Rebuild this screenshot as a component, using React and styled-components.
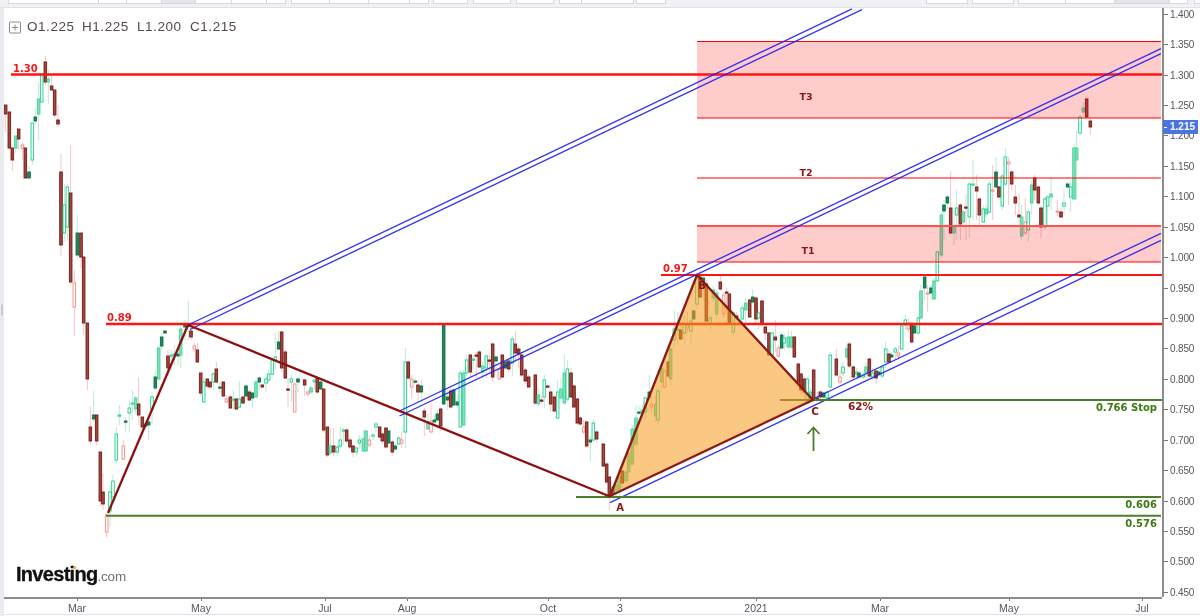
import React from "react";
import styled, { createGlobalStyle } from "styled-components";

const Global = createGlobalStyle`
  html, body { margin: 0; padding: 0; background: #fff; }
  body { font-family: "Liberation Sans", Arial, sans-serif; overflow: hidden; }
`;

const Page = styled.div`
  width: 1200px;
  height: 616px;
  display: flex;
  flex-direction: column;
  background: #eff1f5;
  overflow: hidden;
  filter: blur(0.25px);
`;
const TabStrip = styled.div`
  height: 8px;
  flex: none;
  display: flex;
  align-items: flex-start;
  padding-left: 4px;
  border-bottom: 1px solid #dfe1e6;
  box-sizing: border-box;
`;
const Tab = styled.div`
  width: ${p => p.$w}px;
  margin-left: ${p => p.$gap || 0}px;
  height: 3.5px;
  flex: none;
  box-sizing: border-box;
  background: ${p => (p.$selected ? "#e4e5e8" : "#fff")};
  border: 1px solid #d6d8dd;
  border-top: 0;
  border-left-width: ${p => (p.$gap ? 1 : 0)}px;
`;
const Frame = styled.div`
  flex: 1;
  display: flex;
  min-height: 0;
`;
const LeftRail = styled.div`
  width: 4px;
  flex: none;
  background: #e9ebf0;
  display: flex;
  align-items: center;
  padding-bottom: 4px;
  box-sizing: border-box;
`;
const Grip = styled.div`
  width: 2px;
  height: 12px;
  background: #c9cbd0;
  border-radius: 2px 0 0 2px;
  margin-left: 1px;
`;
const Main = styled.div`
  flex: 1;
  display: flex;
  flex-direction: column;
  background: #fff;
  min-width: 0;
`;
const ChartRow = styled.div`
  height: 589px;
  flex: none;
  display: flex;
`;
const Plot = styled.div`
  width: 1158px;
  flex: none;
  position: relative;
  border-bottom: 2px solid #8c8c8c;
  box-sizing: content-box;
  height: 589px;
`;
const PlotSvg = styled.svg`
  display: block;
  width: 1158px;
  height: 589px;
`;
const Legend = styled.div`
  position: absolute;
  left: 5px;
  top: 12px;
  display: flex;
  align-items: center;
  color: #55494f;
  font-size: 13.5px;
  letter-spacing: 0.55px;
  line-height: 14px;
`;
const LegendIcon = styled.svg`
  width: 12px;
  height: 13px;
  margin-right: 6px;
  flex: none;
`;
const LegendItem = styled.span`
  width: ${p => p.$w}px;
  white-space: nowrap;
`;
const LogoWrap = styled.div`
  position: absolute;
  left: 12px;
  top: 555px;
  display: flex;
  align-items: baseline;
  white-space: nowrap;
`;
const LogoMain = styled.span`
  position: relative;
  font-size: 20px;
  font-weight: 700;
  color: #111;
  letter-spacing: -0.7px;
  -webkit-text-stroke: 0.3px #111;
`;
const LogoDot = styled.span`
  position: absolute;
  left: 57px;
  top: 3px;
  width: 3px;
  height: 3px;
  border-radius: 50%;
  background: #f7a11a;
`;
const LogoCom = styled.span`
  font-size: 13.5px;
  color: #6f6f6f;
  letter-spacing: -0.2px;
`;
const PriceAxis = styled.div`
  flex: 1;
  position: relative;
  display: flex;
  flex-direction: column;
  padding-top: 0.8px;
  border-left: 2px solid #8c8c8c;
  box-sizing: border-box;
  background: #fff;
`;
const PriceTick = styled.div`
  height: 30.43px;
  flex: none;
  display: flex;
  align-items: flex-start;
  font-size: 10px;
  line-height: 12px;
  color: #565656;
  letter-spacing: -0.15px;
`;
const TickMark = styled.span`
  width: 4px;
  height: 1px;
  margin: 5px 2px 0 0;
  background: #777;
  flex: none;
`;
const PriceBadge = styled.div`
  position: absolute;
  left: -1px;
  top: 112px;
  width: 35px;
  height: 14px;
  background: #4a74e0;
  color: #fff;
  font-size: 10px;
  font-weight: 700;
  line-height: 14px;
  display: flex;
  align-items: center;
  padding-left: 1px;
  box-sizing: border-box;
`;
const BadgeTick = styled.span`
  width: 3px;
  height: 1px;
  margin-right: 3px;
  background: #fff;
`;
const TimeAxis = styled.div`
  height: 18px;
  flex: none;
  display: flex;
  background: #fff;
  border-bottom: 1px solid #dfe1e6;
  box-sizing: border-box;
  padding-top: 1.5px;
`;
const TimeTick = styled.div`
  width: 30px;
  margin-left: ${p => p.$gap}px;
  flex: none;
  display: flex;
  flex-direction: column;
  align-items: center;
  color: #565656;
  font-size: 10.5px;
  line-height: 12px;
`;
const TimeMark = styled.span`
  width: 1px;
  height: 2px;
  background: #777;
  margin-bottom: 1px;
`;

/* chart drawing parts */
const HLine = styled.line`
  stroke: ${p => p.$c};
  stroke-width: ${p => p.$w}px;
`;
const Zone = styled.rect`
  fill: #ff0000;
  fill-opacity: 0.2;
`;
const Channel = styled.line`
  stroke: #2020ee;
  stroke-width: 1.35px;
  stroke-opacity: 0.9;
`;
const Leg = styled.line`
  stroke: #8c1010;
  stroke-width: 2.3px;
`;
const Triangle = styled.polygon`
  fill: #f79a1e;
  fill-opacity: 0.55;
  stroke: #8c1a14;
  stroke-width: 2.3px;
  stroke-linejoin: round;
`;
const Label = styled.text`
  font-family: "DejaVu Sans", sans-serif;
  font-weight: 700;
  font-size: ${p => p.$s || 10}px;
  fill: ${p => p.$c};
  text-anchor: ${p => p.$a || "start"};
`;
const Arrow = styled.path`
  fill: none;
  stroke: #4a7f2a;
  stroke-width: 1.8px;
`;

const BODY = {
  r: { fill: "#a5443c", stroke: "#6e1d16" },
  p: { fill: "#fff", stroke: "#f28a86" },
  g: { fill: "#fff", stroke: "#14d088" },
  d: { fill: "#1b8a5c", stroke: "#0e6a42" },
  t: { fill: "#85dfba", stroke: "#3fd49c" },
};
const WickLine = styled.line`
  stroke: ${p => p.$c};
  stroke-width: 1px;
`;
const Body = styled.rect`
  fill: ${p => BODY[p.$k].fill};
  stroke: ${p => BODY[p.$k].stroke};
  stroke-width: 0.9px;
`;

const segA = [
  [17,105,114,"r",105,132],[28,112,148,"r",112,150],[37,148,160,"r",148,171],[47,136,148,"t",136,153],[56,129,139,"r",129,150],
  [67,145,148,"p",142,160],[76,148,178,"r",148,178],[87,172,178,"d",166,178],[97,123,160,"g",123,165],[106,117,121,"d",108,125],
  [116,99,114,"t",83,140],[125,74,102,"g",74,102],[136,62,82,"r",56,85],[145,79,82,"t",69,104],[155,86,90,"r",74,90],
  [164,90,115,"r",90,118],[174,120,124,"r",105,127],[183,172,245,"r",154,256],[193,205,233,"g",184,242],[202,187,227,"g",184,241],
  [212,193,282,"r",145,285],[223,283,307,"p",270,336],[232,233,255,"d",215,258],[243,233,257,"r",233,268],[251,257,323,"r",257,334],
  [262,323,379,"r",323,390],[271,427,441,"r",407,445],[281,415,419,"d",391,422],[290,415,441,"r",415,445],[301,452,501,"r",452,506],
  [309,492,504,"r",473,510],[320,515,532,"p",513,537],[330,492,511,"g",485,527],[339,481,497,"g",475,500],[349,434,460,"g",427,463],
  [358,415,416,"g",405,425],[370,446,459,"p",440,460],[377,421,422,"d",417,432],[388,408,413,"g",400,432],[397,403,404,"t",390,420],
  [407,398,409,"t",396,414],[416,404,415,"r",377,425],[427,417,427,"r",417,430],[437,424,426,"d",420,430],[446,422,425,"d",415,440],
  [456,397,409,"g",392,424],[466,377,388,"d",370,390],[476,348,379,"t",345,380],[485,337,346,"d",333,350],[495,331,333,"d",330,334],
  [504,356,368,"r",350,376],[514,355,356,"g",350,370],[524,354,355,"t",345,365],[534,354,356,"d",350,365],[542,329,355,"t",322,368],
  [555,325,327,"d",320,340],[565,324,326,"t",301,340],[573,331,337,"r",325,340],[583,346,349,"p",343,352],[592,350,362,"r",343,363],
  [602,373,393,"r",373,396],[611,382,402,"g",378,403],[622,379,386,"r",379,388],[630,382,387,"r",381,390],[640,374,382,"g",372,390],
  [649,369,382,"r",362,384],[660,387,388,"d",382,393],[670,382,396,"r",381,397],[679,399,402,"p",395,403],[691,397,408,"r",395,409],
  [700,399,400,"t",390,410],[709,399,409,"r",398,410],[718,399,407,"g",381,408],[729,397,403,"r",396,405],[738,386,396,"d",384,400],
  [748,392,400,"r",390,401],[757,393,398,"d",392,408],[768,382,397,"t",380,399],[778,378,382,"d",376,390],[787,385,387,"r",384,388],
  [798,379,383,"g",377,392],[806,374,380,"g",370,383],[817,360,374,"g",358,375],[826,357,361,"g",333,370],[836,342,349,"d",331,350],
  [845,332,368,"r",331,372],[856,352,378,"r",350,379],[864,389,390,"r",378,407],[874,379,382,"g",375,402],[884,384,412,"p",382,412],[894,379,382,"d",377,392],
];
const segB = [
  [14,380,385,"r",378,396],[24,392,394,"p",390,396],[33,388,392,"t",386,394],[43,380,382,"t",378,390],[52,378,392,"r",377,394],
  [62,382,389,"d",380,390],[71,389,430,"r",389,433],[82,427,455,"r",427,457],[91,446,453,"t",428,455],[101,446,452,"r",428,456],
  [112,447,452,"g",445,456],[121,440,446,"g",427,448],[131,430,431,"g",428,445],[140,430,441,"r",428,444],[150,440,447,"r",438,449],
  [159,446,452,"r",444,457],[169,448,452,"g",446,456],[178,440,443,"g",435,449],[190,439,451,"t",430,452],[198,431,451,"t",430,452],
  [208,440,445,"p",436,447],[219,435,436,"t",433,440],[228,424,427,"g",422,432],[239,427,437,"r",426,438],[247,434,441,"r",432,444],
  [258,428,447,"r",427,449],[266,431,443,"d",430,444],[277,442,452,"r",440,456],[286,446,449,"d",444,451],[296,438,444,"g",436,445],
  [305,440,443,"p",432,448],[316,362,432,"g",348,448],[325,362,378,"r",360,380],[335,379,387,"p",375,398],[346,381,382,"d",378,384],
  [354,385,392,"r",380,402],[364,386,392,"d",380,402],[373,411,417,"r",408,436],[384,422,429,"t",414,430],[393,421,432,"p",403,433],
  [403,420,422,"d",415,425],[412,414,420,"d",410,422],[422,409,426,"r",408,431],[431,324,404,"d",324,404],[442,397,400,"d",390,410],
  [452,391,407,"r",388,408],[461,390,405,"d",388,406],[472,402,405,"d",395,408],[481,373,427,"g",370,427],[491,373,425,"t",370,426],
  [500,360,373,"g",355,376],[511,355,372,"r",354,378],[520,359,360,"g",355,370],[529,355,356,"r",352,378],[538,352,367,"r",350,368],
  [548,366,372,"t",362,378],[559,356,368,"g",354,378],[568,360,361,"r",355,372],[578,344,377,"r",342,382],[588,357,361,"d",355,370],
  [598,369,379,"p",365,380],[607,355,377,"r",354,378],[617,362,368,"d",358,370],[626,361,369,"r",358,372],[637,339,363,"g",336,376],
  [646,344,353,"r",331,360],[656,349,354,"r",345,368],[665,355,375,"r",352,377],[676,370,381,"r",368,384],[686,377,387,"r",375,388],
  [706,375,403,"r",374,405],[715,395,404,"t",388,406],[725,400,401,"r",396,404],[733,380,397,"g",375,408],[743,386,387,"r",384,388],
  [752,392,404,"r",390,412],[763,397,411,"r",395,412],[773,392,418,"g",380,419],[783,389,398,"t",378,400],[793,373,403,"t",355,405],
  [802,369,399,"g",360,402],[813,373,397,"r",368,398],[822,386,407,"r",384,408],[832,399,423,"r",398,425],[841,418,424,"r",416,426],
  [851,427,432,"p",420,434],[860,422,446,"r",420,448],[871,440,442,"d",436,461],[880,423,440,"g",420,441],[890,432,439,"r",430,443],
];
const segC = [
  [130,444,466,"r",444,468],[140,464,482,"r",462,484],[148,477,496,"r",476,510],[160,487,493,"d",485,500],[168,485,490,"t",482,498],
  [178,477,490,"t",475,498],[187,471,483,"r",470,490],[198,472,481,"t",470,484],[206,453,472,"t",450,480],[217,429,464,"t",425,466],
  [228,418,444,"t",405,447],[237,412,413,"d",406,415],[247,410,413,"t",405,418],[256,398,412,"g",396,420],[268,392,397,"d",375,398],
  [274,404,407,"p",396,412],[287,404,416,"t",395,422],[294,391,420,"g",388,425],[305,368,382,"t",365,390],[314,371,387,"p",368,388],
  [325,362,376,"r",360,378],[332,349,379,"t",345,385],[343,329,340,"g",311,347],[353,329,330,"g",312,345],[362,330,339,"r",325,340],
  [373,324,333,"g",315,345],[382,325,328,"p",312,335],[393,321,331,"g",318,345],[401,311,319,"d",309,320],[411,275,304,"g",272,310],
  [420,277,297,"r",270,298],[430,278,287,"d",275,300],[439,284,321,"r",280,325],[451,318,324,"g",315,330],[460,290,298,"t",286,302],
  [470,293,314,"t",290,320],[481,282,289,"r",275,291],[491,295,314,"p",292,318],[500,292,293,"r",288,310],[508,294,323,"r",293,325],
  [520,313,332,"g",311,335],[530,316,317,"r",312,320],[547,308,319,"g",305,322],[557,303,310,"t",298,322],[569,300,317,"r",298,318],
  [578,297,302,"d",289,304],[588,298,319,"r",296,325],[596,313,318,"g",310,330],[606,301,324,"r",300,326],[616,327,333,"r",325,340],
  [627,333,355,"r",332,356],[636,333,355,"g",332,356],[646,337,340,"r",320,352],[655,348,356,"p",345,358],[665,335,348,"d",333,350],
  [673,338,343,"g",334,350],[685,337,347,"t",331,349],[694,337,347,"t",331,349],[703,337,357,"r",336,358],[715,364,382,"r",362,384],
  [723,374,390,"r",372,395],[733,379,392,"r",377,400],[742,379,403,"g",377,405],[752,392,400,"t",388,402],[761,370,400,"r",369,402],
  [772,398,399,"r",392,402],[781,392,397,"r",390,404],[791,393,397,"d",391,399],[801,392,398,"g",390,400],[811,355,387,"g",352,389],
  [829,359,375,"r",349,377],[840,377,382,"p",370,384],[849,367,373,"g",362,376],[860,349,357,"t",345,360],[868,344,366,"r",342,368],
  [880,367,377,"r",365,380],[890,372,374,"t",368,380],[897,373,377,"d",370,380],
];
const segD = [
  [40,375,377,"g",372,379],[48,367,373,"t",362,378],[58,359,376,"r",358,378],[68,373,377,"g",368,380],[78,371,378,"r",370,384],
  [87,372,374,"d",368,376],[97,367,376,"g",365,378],[107,349,362,"g",342,368],[117,354,362,"r",350,363],[125,355,357,"d",352,358],
  [136,349,352,"g",347,360],[145,353,356,"p",345,360],[155,326,349,"g",324,350],[166,320,325,"g",315,330],[175,323,329,"p",318,332],
  [185,324,342,"r",322,344],[193,326,333,"d",324,334],[205,318,333,"g",316,335],[213,291,318,"t",285,320],[224,277,288,"d",275,300],
  [233,293,294,"p",285,312],[243,288,293,"d",285,300],[252,281,299,"t",278,300],[262,252,281,"g",250,282],[274,215,255,"t",212,258],
  [282,205,211,"d",200,240],[292,197,203,"d",195,210],[302,208,233,"r",171,234],[312,227,233,"t",208,245],[320,208,215,"g",190,240],
  [331,205,224,"r",203,240],[340,212,222,"t",210,225],[348,207,208,"r",195,240],[358,184,217,"g",182,238],[369,184,185,"g",160,220],
  [380,187,191,"r",175,220],[388,199,215,"r",198,226],[400,209,222,"g",205,223],[409,209,214,"t",205,218],[418,184,212,"g",180,214],
  [428,190,191,"p",165,220],[438,172,187,"d",157,190],[447,187,197,"r",185,200],[457,176,206,"g",174,210],[466,157,184,"g",148,186],
  [476,162,164,"p",157,205],[485,172,184,"r",170,190],[496,197,203,"r",185,215],[507,215,217,"r",194,225],[515,217,236,"t",205,240],
  [526,222,233,"p",198,235],[535,212,230,"g",209,242],[545,185,203,"t",180,215],[554,178,190,"r",175,200],[565,187,203,"r",185,205],
  [573,208,227,"r",205,238],[585,199,227,"g",197,230],[593,197,206,"g",195,225],[603,194,197,"t",177,210],[622,211,212,"p",200,216],
  [633,212,217,"r",208,218],[642,203,206,"g",190,215],[653,184,187,"d",182,188],[662,187,197,"g",180,212],[672,148,199,"t",144,200],
  [680,148,160,"t",130,200],[690,117,133,"g",115,136],
];
const segE = [[250,108,112,"t",102,116],[260,99,117,"r",97,118],[271,121,127,"r",117,135]];

const candles = [
  ...segA.map(c => [c[0] / 3, ...c.slice(1)]),
  ...segB.map(c => [300 + c[0] / 3, ...c.slice(1)]),
  ...segC.map(c => [560 + c[0] / 3, ...c.slice(1)]),
  ...segD.map(c => [850 + c[0] / 3, ...c.slice(1)]),
  ...segE.map(c => [1000 + c[0] / 3, ...c.slice(1)]),
];

const Candle = ({ c }) => {
  const [x, top, bottom, k, wt, wb] = c;
  const red = k === "r" || k === "p";
  return (
    <g>
      <WickLine x1={x} x2={x} y1={wt} y2={wb} $c={red ? "#f7c3c8" : "#bfe8d6"} />
      <Body x={x - 1.3} y={top} width={2.6} height={Math.max(bottom - top, 1.2)} $k={k} />
    </g>
  );
};

const PRICES = ["1.400","1.350","1.300","1.250","1.200","1.150","1.100","1.050","1.000","0.950","0.900","0.850","0.800","0.750","0.700","0.650","0.600","0.550","0.500","0.450"];
const DATES = [["Mar",58],["May",94],["Jul",94],["Aug",52],["Oct",111],["3",42],["2021",106],["Mar",94],["May",99],["Jul",103]];
const TABS = [[91,4],[28],[35],[34,0,1],[36],[35],[19],[39,5],[39],[41],[19],[35,4],[38,5],[38,5],[23,5],[52],[30,2],[42,260],[42,4],[48,4],[49],[55,0,1],[18],[30,6]];

const slope = 0.476;
const chan = (x, y, x2) => ({ x1: x, y1: y, x2, y2: y - (x2 - x) * slope });

export default function App() {
  return (
    <>
      <Global />
      <Page>
        <TabStrip>
          {TABS.map(([w, gap, sel], i) => (
            <Tab key={i} $w={w} $gap={gap} $selected={!!sel} />
          ))}
        </TabStrip>
        <Frame>
          <LeftRail><Grip /></LeftRail>
          <Main>
            <ChartRow>
              <Plot>
                <PlotSvg viewBox="4 8 1158 589">
                  {candles.map((c, i) => <Candle key={i} c={c} />)}

                  <Zone x={697} y={41} width={464} height={77} />
                  <Zone x={697} y={226} width={464} height={36} />
                  <HLine x1={697} x2={1161} y1={41.5} y2={41.5} $c="#f00" $w={1.2} />
                  <HLine x1={697} x2={1161} y1={118} y2={118} $c="#f00" $w={1.2} />
                  <HLine x1={697} x2={1161} y1={178} y2={178} $c="#f00" $w={1.2} />
                  <HLine x1={697} x2={1161} y1={226} y2={226} $c="#ff5050" $w={2} />
                  <HLine x1={697} x2={1161} y1={262} y2={262} $c="#f00" $w={1.2} />

                  <HLine x1={11} x2={1162} y1={74.5} y2={74.5} $c="#ff1414" $w={2.4} />
                  <HLine x1={106} x2={1162} y1={324} y2={324} $c="#ff1414" $w={2.4} />
                  <HLine x1={661} x2={1162} y1={275} y2={275} $c="#ff1414" $w={2.2} />

                  <Channel {...chan(188, 325, 852)} />
                  <Channel {...chan(190, 329.5, 862)} />
                  <Channel {...chan(399.5, 411, 1161)} />
                  <Channel {...chan(399.5, 416, 1161)} />
                  <Channel {...chan(815, 398, 1161)} />
                  <Channel {...chan(610, 502.7, 1161)} />

                  <HLine x1={576} x2={1161} y1={497} y2={497} $c="#4a7f2a" $w={2} />
                  <HLine x1={106} x2={1161} y1={515.7} y2={515.7} $c="#4a7f2a" $w={2} />
                  <HLine x1={780} x2={1162} y1={400} y2={400} $c="#4a7f2a" $w={2} />

                  <Triangle points="610,496 697,275 813,400" />
                  <Leg x1={108} y1={513} x2={188} y2={325} />
                  <Leg x1={188} y1={325} x2={610} y2={496.5} />
                  <Arrow d="M813.5 451V428M807.5 434L813.5 427.5L819.5 434" />

                  <Label x={13} y={72} $c="#f01818">1.30</Label>
                  <Label x={107} y={321} $c="#f01818">0.89</Label>
                  <Label x={663} y={272} $c="#f01818">0.97</Label>
                  <Label x={806} y={100} $c="#8c1414" $s={9.5} $a="middle">T3</Label>
                  <Label x={806} y={176} $c="#8c1414" $s={9.5} $a="middle">T2</Label>
                  <Label x={808} y={254} $c="#8c1414" $s={9.5} $a="middle">T1</Label>
                  <Label x={620} y={511} $c="#8c1414" $a="middle">A</Label>
                  <Label x={702} y={289} $c="#8c1414" $a="middle">B</Label>
                  <Label x={815} y={415} $c="#8c1414" $s={10.5} $a="middle">C</Label>
                  <Label x={848} y={410} $c="#8c1414" $s={10.5}>62%</Label>
                  <Label x={1157} y={411} $c="#3a7a10" $a="end">0.766 Stop</Label>
                  <Label x={1157} y={508} $c="#3a7a10" $a="end">0.606</Label>
                  <Label x={1157} y={526.5} $c="#3a7a10" $a="end">0.576</Label>
                </PlotSvg>
                <Legend>
                  <LegendIcon viewBox="0 0 12 13">
                    <rect x="0.5" y="1" width="11" height="11" rx="1" fill="none" stroke="#8a8a8a" />
                    <path d="M6 3.5v6M3 6.5h6" stroke="#8a8a8a" />
                  </LegendIcon>
                  <LegendItem $w={55}>O1.225</LegendItem>
                  <LegendItem $w={55}>H1.225</LegendItem>
                  <LegendItem $w={53}>L1.200</LegendItem>
                  <LegendItem $w={50}>C1.215</LegendItem>
                </Legend>
                <LogoWrap>
                  <LogoMain>Investing<LogoDot /></LogoMain>
                  <LogoCom>.com</LogoCom>
                </LogoWrap>
              </Plot>
              <PriceAxis>
                {PRICES.map(p => (
                  <PriceTick key={p}><TickMark />{p}</PriceTick>
                ))}
                <PriceBadge><BadgeTick />1.215</PriceBadge>
              </PriceAxis>
            </ChartRow>
            <TimeAxis>
              {DATES.map(([d, gap], i) => (
                <TimeTick key={i} $gap={gap}>
                  <TimeMark />{d}
                </TimeTick>
              ))}
            </TimeAxis>
          </Main>
        </Frame>
      </Page>
    </>
  );
}
